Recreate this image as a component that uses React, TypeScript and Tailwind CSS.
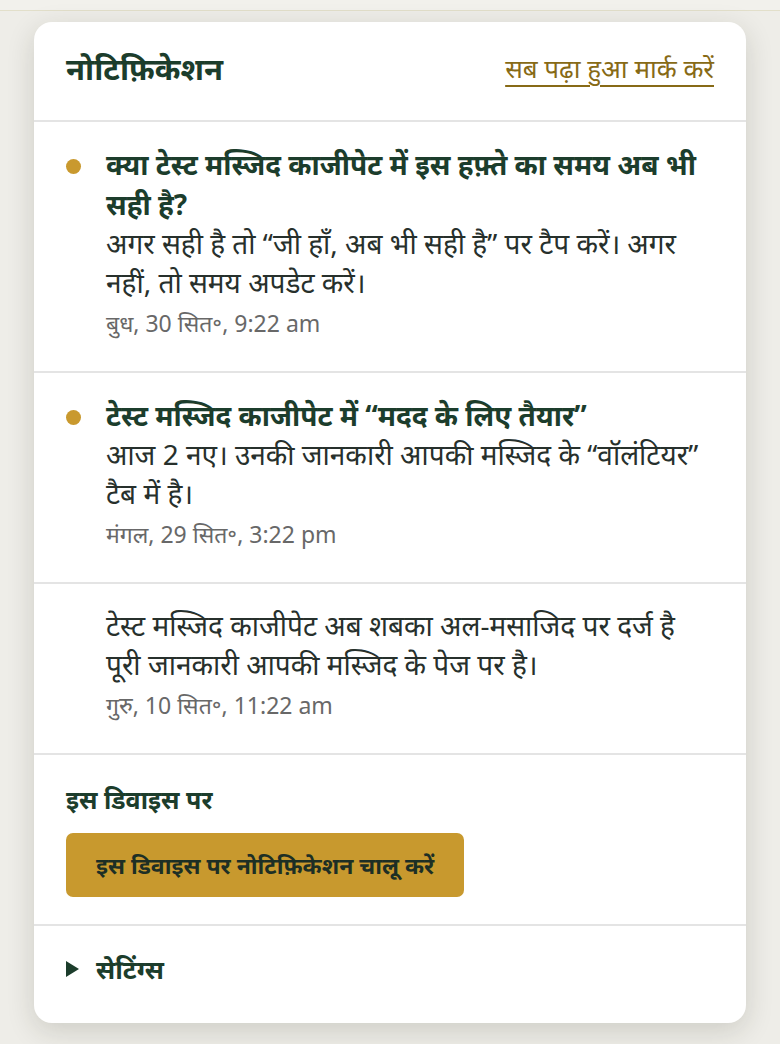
import React from "react";

type Item = {
  unread: boolean;
  title?: string;
  body: React.ReactNode;
  date: string;
};

const items: Item[] = [
  {
    unread: true,
    title: "क्या टेस्ट मस्जिद काजीपेट में इस हफ़्ते का समय अब भी सही है?",
    body: "अगर सही है तो “जी हाँ, अब भी सही है” पर टैप करें। अगर नहीं, तो समय अपडेट करें।",
    date: "बुध, 30 सित॰, 9:22 am",
  },
  {
    unread: true,
    title: "टेस्ट मस्जिद काजीपेट में “मदद के लिए तैयार”",
    body: "आज 2 नए। उनकी जानकारी आपकी मस्जिद के “वॉलंटियर” टैब में है।",
    date: "मंगल, 29 सित॰, 3:22 pm",
  },
  {
    unread: false,
    body: (
      <>
        टेस्ट मस्जिद काजीपेट अब शबका अल-मसाजिद पर दर्ज है
        <br />
        पूरी जानकारी आपकी मस्जिद के पेज पर है।
      </>
    ),
    date: "गुरु, 10 सित॰, 11:22 am",
  },
];

export default function App() {
  return (
    <div className="min-h-[1044px] w-full bg-[#eeede8] font-['Noto_Sans','Noto_Sans_Devanagari',sans-serif]">
      <div className="h-[11px] border-b border-[#e2dfca] bg-[#f2f1ec]" />
      <div className="px-[34px] pt-[11px] pb-[22px]">
        <div className="overflow-hidden rounded-[18px] bg-white shadow-[0_8px_28px_rgba(40,40,20,0.16)]">
          <div className="flex items-start justify-between border-b-2 border-[#e4e4e4] px-8 pt-[26px] pb-[32px]">
            <h1 className="text-[31px] font-bold leading-[40px] text-[#1c3d2c]">नोटिफ़िकेशन</h1>
            <a className="mt-[2px] text-[26px] leading-[36px] text-[#876a16] underline decoration-2 underline-offset-[7px]">
              सब पढ़ा हुआ मार्क करें
            </a>
          </div>

          {items.map((it, i) => (
            <div key={i} className="flex border-b-2 border-[#e4e4e4] pl-8 pr-[36px] pt-[22px] pb-[32px]">
              <div className="w-[40px] shrink-0 pt-[15px]">
                {it.unread && <div className="h-[15px] w-[15px] rounded-full bg-[#c9992e]" />}
              </div>
              <div className="min-w-0 flex-1">
                {it.title && (
                  <div className="text-[28px] font-bold leading-[40px] text-[#1c3d2c]">{it.title}</div>
                )}
                <div className="text-[28px] leading-[39px] text-[#27302c]">{it.body}</div>
                <div className="mt-[5px] text-[23px] leading-[32px] text-[#686868]">{it.date}</div>
              </div>
            </div>
          ))}

          <div className="border-b-2 border-[#e4e4e4] px-8 pt-[28px] pb-[27px]">
            <div className="text-[25px] font-bold leading-[32px] text-[#1c3d2c]">इस डिवाइस पर</div>
            <button className="mt-[18px] h-[64px] rounded-[7px] bg-[#c8992e] px-[30px] text-[23px] font-bold text-[#1d2f25]">
              इस डिवाइस पर नोटिफ़िकेशन चालू करें
            </button>
          </div>

          <div className="flex items-center gap-[17px] px-8 pt-[26px] pb-[37px]">
            <svg width="13" height="16" viewBox="0 0 13 16" className="shrink-0">
              <path d="M0 0 L13 8 L0 16 Z" fill="#1c3d2c" />
            </svg>
            <span className="text-[26px] font-bold leading-[34px] text-[#1c3d2c]">सेटिंग्स</span>
          </div>
        </div>
      </div>
    </div>
  );
}
